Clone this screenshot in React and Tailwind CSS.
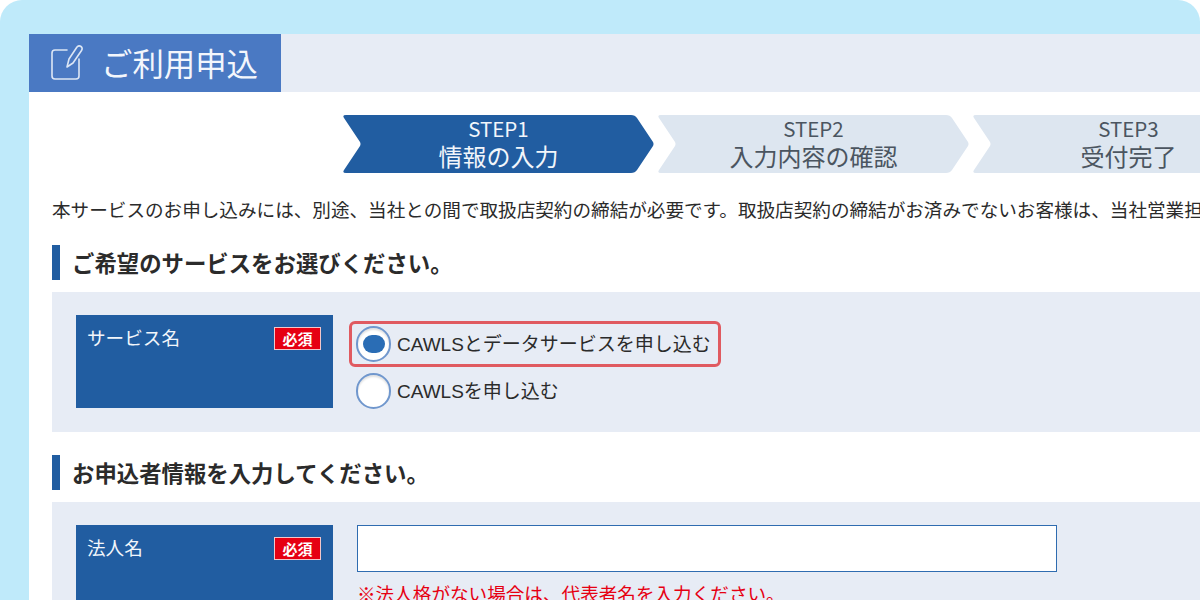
const jp = "font-['Noto_Sans_CJK_JP','Noto_Sans',sans-serif]";

function StepShape({ fill }) {
  return (
    <svg className="absolute inset-0" width="312" height="58" viewBox="0 0 312 58">
      <path d="M3 0H288Q292 0 294 3L310 27Q311 29 310 31L294 55Q292 58 288 58H3Q-1 58 1 55L17 31Q18 29 17 27L1 3Q-1 0 3 0Z" fill={fill} />
    </svg>
  );
}

function Step({ n, title, active }) {
  return (
    <div className="relative w-[312px] h-[58px] shrink-0">
      <StepShape fill={active ? "#215da1" : "#dde6f0"} />
      <div className={`relative flex flex-col items-center pt-[1px] -ml-[1px] ${active ? "text-[#f2f6fb]" : "text-[#4b5560]"}`}>
        <div className="text-[20.5px] leading-[25px]">{n}</div>
        <div className="text-[24px] leading-[29px]">{title}</div>
      </div>
    </div>
  );
}

function Badge() {
  return (
    <span className="w-[47px] h-[23px] bg-[#e60012] border border-[#f3c6c9] text-white text-[15px] font-bold leading-[21px] text-center">必須</span>
  );
}

function Label({ text, className }) {
  return (
    <div className={`w-[257px] bg-[#215da1] flex items-start justify-between pl-[11px] pr-[12px] pt-[12px] shrink-0 ${className}`}>
      <span className="-mt-[2px] text-[#f2f6fb] text-[18.6px] leading-[24px]">{text}</span>
      <Badge />
    </div>
  );
}

function Radio({ checked }) {
  return (
    <span className="w-[35px] h-[36px] rounded-full bg-white border-2 border-[#7097cd] shadow-[inset_0_2px_2px_rgba(0,0,0,0.12)] flex items-center justify-center shrink-0">
      {checked && <span className="w-[22px] h-[18px] rounded-full bg-[#2a6db5]" />}
    </span>
  );
}

function Heading({ children }) {
  return (
    <div className="flex items-center h-[35px] ml-[23px]">
      <div className="w-[8px] h-[35px] bg-[#215da1]" />
      <h2 className="ml-[12px] text-[22.4px] font-bold text-[#2b2b2b] whitespace-nowrap">{children}</h2>
    </div>
  );
}

const optionText = "ml-[6px] mt-[2px] text-[19px] leading-[28px] text-[#2b2b2b] whitespace-nowrap font-['Liberation_Sans','Noto_Sans_CJK_JP',sans-serif]";

export default function App() {
  return (
    <div className={`h-[600px] w-[1200px] overflow-hidden bg-white ${jp}`}>
      <div className="h-full rounded-t-[22px] bg-[#bfeafa] pl-[29px] pt-[34px]">
        <div className="h-[566px] w-[1171px] overflow-hidden bg-white">
          <div className="h-[58px] bg-[#e7ecf5]">
            <div className="h-[58px] w-[252px] bg-[#4a79c3] flex items-center pl-[22px]">
              <svg width="32" height="36" viewBox="0 0 32 36" fill="none" stroke="#dce6f5" strokeWidth="1.6" strokeLinecap="round" strokeLinejoin="round">
                <path d="M16 5H4Q1 5 1 8V31Q1 34 4 34H25Q28 34 28 31V14" />
                <path d="M16 22L18 14L26 2Q28 0 30 1.5Q32 3 30.5 5.5L22 18Z" />
              </svg>
              <span className="ml-[18px] text-[31.4px] text-[#f3f6fc] leading-none whitespace-nowrap">ご利用申込</span>
            </div>
          </div>

          <div className="flex ml-[314px] mt-[23px] gap-[3px]">
            <Step n="STEP1" title="情報の入力" active />
            <Step n="STEP2" title="入力内容の確認" />
            <Step n="STEP3" title="受付完了" />
          </div>

          <p className="ml-[23px] mt-[24px] h-[24px] text-[18.6px] leading-[24px] text-[#2b2b2b] whitespace-nowrap">
            本サービスのお申し込みには、別途、当社との間で取扱店契約の締結が必要です。取扱店契約の締結がお済みでないお客様は、当社営業担当者までお問い合わせください。
          </p>

          <div className="mt-[24px]">
            <Heading>ご希望のサービスをお選びください。</Heading>
          </div>

          <div className="ml-[23px] mt-[12px] h-[140px] bg-[#e7ecf5] pl-[24px] pt-[23px] flex">
            <Label text="サービス名" className="h-[93px]" />
            <div className="ml-[16px] mt-[6px] flex flex-col items-start">
              <div className="w-[372px] h-[46px] pl-[4px] flex items-center border-[3px] border-[#e05a60] rounded-[6px]">
                <Radio checked />
                <span className={optionText}>CAWLSとデータサービスを申し込む</span>
              </div>
              <div className="mt-[6px] ml-[7px] flex items-center">
                <Radio />
                <span className={optionText}>CAWLSを申し込む</span>
              </div>
            </div>
          </div>

          <div className="mt-[23px]">
            <Heading>お申込者情報を入力してください。</Heading>
          </div>

          <div className="ml-[23px] mt-[12px] h-[140px] bg-[#e7ecf5] pl-[24px] pt-[23px] flex">
            <Label text="法人名" className="h-[117px]" />
            <div className="ml-[24px]">
              <div className="w-[700px] h-[47px] bg-white border border-[#2f6cb0]" />
              <p className="mt-[9px] text-[18.6px] leading-[24px] text-[#e60012] whitespace-nowrap">※法人格がない場合は、代表者名を入力ください。</p>
            </div>
          </div>
        </div>
      </div>
    </div>
  );
}
